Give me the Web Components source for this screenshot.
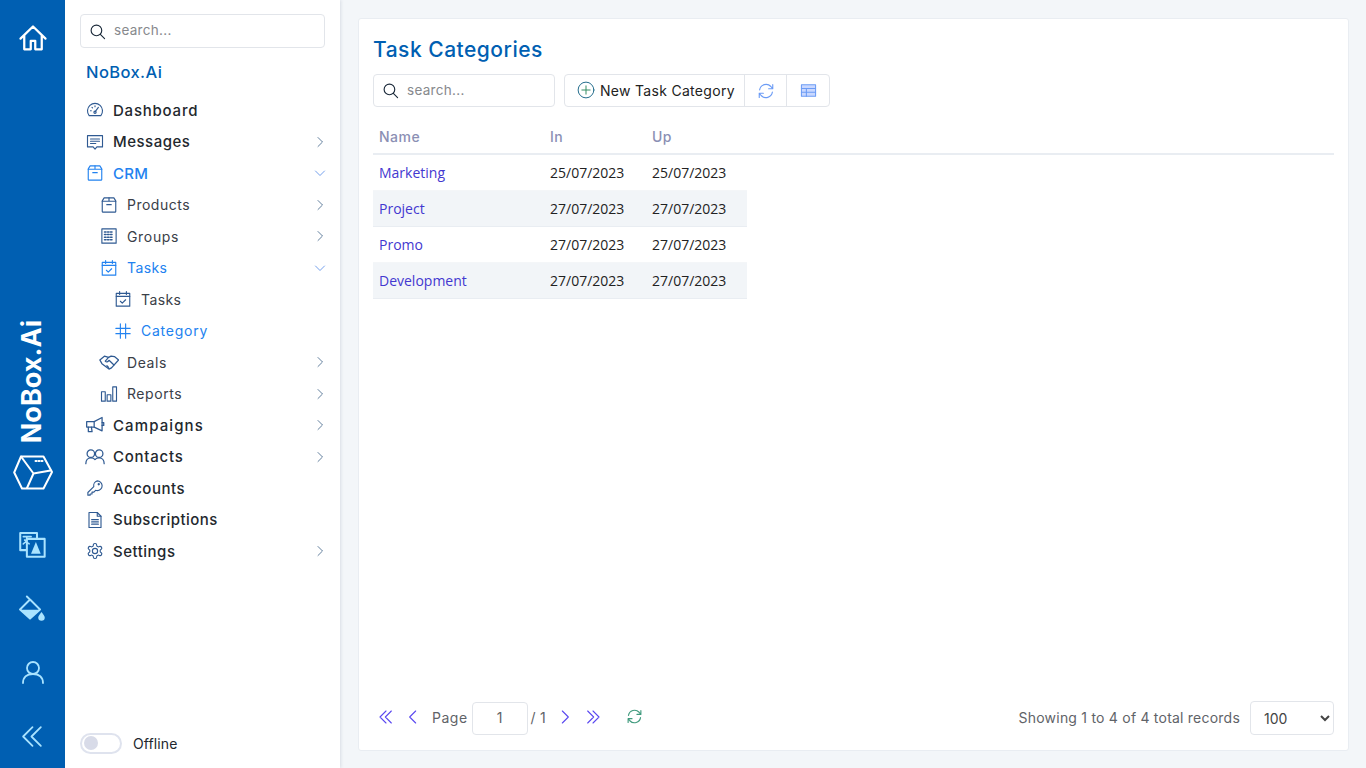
<!DOCTYPE html>
<html lang="en">
<head>
<meta charset="utf-8">
<title>Task Categories</title>
<style>
  html, body { margin: 0; height: 100%; overflow: hidden; }
  body { font-family: Inter, "Noto Sans", sans-serif; background: #f3f6f9; color: #222; }
</style>
</head>
<body>
<app-shell>
  <icon-rail slot="rail"></icon-rail>
  <side-nav slot="nav"></side-nav>
  <task-page slot="main"></task-page>
</app-shell>

<script>
const ICONS = {
  home: '<path d="M2 12.500 12 2.800l10 9.700M5 10v11h5.200v-6.800h3.600V21H19V10"/>',
  search: '<circle cx="10.500" cy="10.500" r="7.500"/><path d="m16 16 6 6"/>',
  gauge: '<path d="M4.200 19.500a10 10 0 1 1 15.600 0z"/><path d="m12 14.500 4.500-6"/><circle cx="12" cy="15" r="1.500"/><path d="M6 13h1M8 8.500l.7.7M12 6.500v1"/>',
  message: '<path d="M2 3.500h20v15h-7.500L12 21.500 9.500 18.500H2z"/><path d="M6 8h12M6 11h12M6 14h7"/>',
  box: '<path d="M5.500 2.500h13l2.500 4v14a1 1 0 0 1-1 1H4a1 1 0 0 1-1-1v-14z"/><path d="M3 7h18M12 2.500V7M9 11.500h6"/>',
  building: '<rect x="2.500" y="2.500" width="19" height="19"/><path d="M6 6.500h2m2 0h2m2 0h2M6 10h2m2 0h2m2 0h2M6 13.500h2m2 0h2m2 0h2M6 17h2m2 0h2m2 0h2" stroke-width="2"/>',
  calendar: '<rect x="3" y="4.500" width="18" height="17"/><path d="M3 8.500h18M7.500 2v4M16.500 2v4M8.500 15l2.500 2.500 4.500-4.500"/>',
  hash: '<path d="M8.500 2.500v19M15.500 2.500v19M2.500 8.500h19M2.500 15.500h19"/>',
  handshake: '<path d="M1 9.500 6.500 5l5 1.500L14.500 5l4 .5L23.500 9.500 15 19l-3 1.500L3.500 14z"/><path d="M11.500 6.500 7.500 11c1.500 1.500 3 1 4.500-1l6 5.500M9.500 16.500l2 2"/>',
  bars: '<rect x="2" y="9" width="5" height="12.500"/><rect x="9.500" y="13" width="5" height="8.500"/><rect x="17" y="2.500" width="5" height="19"/>',
  megaphone: '<path d="M2 8h9l9.500-5v16L11 14.500H2z"/><path d="M11 8v6.500M4 14.500V20h4.500l-.8-5.500M20.500 9h2v3.500h-2"/>',
  people: '<circle cx="7" cy="8" r="4.500"/><circle cx="17" cy="8" r="4.500"/><path d="M1 20c0-4 2.500-7 6-7s5 2 5 2 1.500-2 5-2 6 3 6 7"/>',
  key: '<path d="M15 2.500a6.500 6.500 0 0 1 0 13c-.8 0-1.500-.1-2.200-.4l-2.300 2.400H8V20H5.500v1.500h-3V18l7.900-7.900A6.500 6.500 0 0 1 15 2.500z"/><circle cx="17" cy="7" r=".8"/>',
  doc: '<path d="M4 2h11l5 5v15H4z"/><path d="M15 2v5h5M7.500 11.500h9M7.500 14.500h9M7.500 17.500h9"/>',
  gear: '<path d="M12.220 2h-.44a2 2 0 0 0-2 2v.18a2 2 0 0 1-1 1.730l-.43.250a2 2 0 0 1-2 0l-.15-.08a2 2 0 0 0-2.730.730l-.22.380a2 2 0 0 0 .730 2.730l.15.100a2 2 0 0 1 1 1.720v.510a2 2 0 0 1-1 1.740l-.15.090a2 2 0 0 0-.730 2.730l.22.380a2 2 0 0 0 2.730.730l.15-.08a2 2 0 0 1 2 0l.43.250a2 2 0 0 1 1 1.730V20a2 2 0 0 0 2 2h.44a2 2 0 0 0 2-2v-.18a2 2 0 0 1 1-1.730l.43-.250a2 2 0 0 1 2 0l.15.080a2 2 0 0 0 2.730-.730l.22-.390a2 2 0 0 0-.730-2.730l-.15-.080a2 2 0 0 1-1-1.740v-.5a2 2 0 0 1 1-1.740l.15-.090a2 2 0 0 0 .730-2.730l-.22-.380a2 2 0 0 0-2.730-.730l-.15.080a2 2 0 0 1-2 0l-.43-.250a2 2 0 0 1-1-1.730V4a2 2 0 0 0-2-2z"/><circle cx="12" cy="12" r="3.500"/>',
  right: '<path d="m8 3 9 9-9 9"/>',
  left: '<path d="m16 3-9 9 9 9"/>',
  down: '<path d="m3 8 9 9 9-9"/>',
  dleft: '<path d="M12 3 3 12l9 9M20 3l-9 9 9 9"/>',
  dright: '<path d="m4 3 9 9-9 9M12 3l9 9-9 9"/>',
  refresh: '<path d="M3.500 10.500A8.700 8.700 0 0 1 18.500 6l2.500 3M21 3.500V9h-5.500M20.500 13.500A8.700 8.700 0 0 1 5.500 18L3 15M3 20.500V15h5.500"/>',
  plus: '<circle cx="12" cy="12" r="10.500"/><path d="M12 6.500v11M6.500 12h11" stroke="#2f8a5f"/>',
  table: '<rect x="2" y="4" width="20" height="16" fill="#c9d8ff"/><path d="M2 9.300h20M2 14.600h20M9 9.300V20"/>',
  translate: '<rect x="1.100" y="1.800" width="14.900" height="15.200"/><rect x="7" y="7" width="15.800" height="15.800" fill="#005fb2"/><path d="M3.800 5h7M7 5c0 3-1.200 5-3.200 6.500M5 8c1 1.500 2.500 2.700 4 3.400" stroke-width="1.400"/><path d="m15 9.800 4.300 10.500h-8.600z" fill="currentColor" stroke="none"/>',
  paint: '<path d="M9.800 4 18.700 12.900 9.800 21 .9 12.900zM7 1.300 10.700 5"/><path d="M1 13h17.500L9.800 21z" fill="currentColor" stroke="none"/><path d="M20 15c1.700 2.300 2.900 3.500 2.900 5a2.900 2.900 0 0 1-5.800 0c0-1.500 1.200-2.700 2.900-5z" fill="currentColor" stroke="none"/>',
  person: '<circle cx="12" cy="8" r="6"/><path d="M2 23c0-6 4-9 10-9s10 3 10 9"/>',
  cube: '<path d="M8 2h22.500L39 17.500 30.500 34H9L1.200 18z"/><path d="M8 2 20.500 19 37.500 16M20.500 19 14 33.500"/><path d="M22.500 6.500h1M25.500 6.500h1M28.500 6.500h1"/>'
};

// small wrapper so every icon is one tag
class UiIcon extends HTMLElement {
  connectedCallback() {
    const size = this.getAttribute('size') || 18;
    const sw = this.getAttribute('stroke') || 1.6;
    const name = this.getAttribute('name');
    const box = name === 'cube' ? '0 0 40 37' : '0 0 24 24';
    this.attachShadow({ mode: 'open' });
    this.shadowRoot.innerHTML = `
      <style>
        :host { display: inline-flex; flex: none; }
        svg { display: block; fill: none; stroke: currentColor; stroke-linecap: round; stroke-linejoin: round; }
      </style>
      <svg width="${size}" height="${size}" viewBox="${box}" stroke-width="${sw}">${ICONS[name] || ''}</svg>
    `;
  }
}
customElements.define('ui-icon', UiIcon);

class AppShell extends HTMLElement {
  connectedCallback() {
    this.attachShadow({ mode: 'open' });
    this.shadowRoot.innerHTML = `
      <style>
        :host { display: flex; width: 1366px; height: 768px; }
        main { flex: 1; min-width: 0; padding: 18px 17px 17px 18px; box-sizing: border-box; display: flex; }
      </style>
      <slot name="rail"></slot>
      <slot name="nav"></slot>
      <main><slot name="main"></slot></main>
    `;
  }
}
customElements.define('app-shell', AppShell);

class IconRail extends HTMLElement {
  connectedCallback() {
    this.attachShadow({ mode: 'open' });
    this.shadowRoot.innerHTML = `
      <style>
        :host { display: flex; flex-direction: column; align-items: center; width: 65px; height: 768px; background: #005fb2; color: #a9e3ff; flex: none; }
        .home { height: 76px; display: flex; align-items: center; color: #fff; }
        .spacer { flex: 1; }
        .brand { writing-mode: vertical-rl; transform: rotate(180deg); font: 700 27px/1 Inter, sans-serif; color: #fff; margin-left: -3px; }
        .cube { color: #fff; height: 39px; margin: 10px 0 20px; display: flex; align-items: center; }
        .item { height: 64px; display: flex; align-items: center; justify-content: center; }
      </style>
      <div class="home"><ui-icon name="home" size="30" stroke="1.800"></ui-icon></div>
      <div class="spacer"></div>
      <div class="brand">NoBox.Ai</div>
      <div class="cube"><ui-icon name="cube" size="40" stroke="2"></ui-icon></div>
      <div class="item"><ui-icon name="translate" size="27" stroke="1.800"></ui-icon></div>
      <div class="item"><ui-icon name="paint" size="27" stroke="1.700"></ui-icon></div>
      <div class="item"><ui-icon name="person" size="24" stroke="1.800"></ui-icon></div>
      <div class="item"><ui-icon name="dleft" size="25" stroke="1.700"></ui-icon></div>
    `;
  }
}
customElements.define('icon-rail', IconRail);

class SearchBox extends HTMLElement {
  connectedCallback() {
    this.attachShadow({ mode: 'open' });
    this.shadowRoot.innerHTML = `
      <style>
        :host { display: flex; align-items: center; box-sizing: border-box; gap: 8px; padding-left: 8px; background: #fff; border: 1px solid #e2e5ea; border-radius: 4px; color: #1b2a3a; }
        input { border: 0; outline: 0; padding: 0 0 2px; width: 100%; min-width: 0; background: none; font: 400 13.500px Inter, sans-serif; letter-spacing: .3px; }
        input::placeholder { color: #87898d; opacity: 1; }
      </style>
      <ui-icon name="search" size="17"></ui-icon>
      <input placeholder="search...">
    `;
  }
}
customElements.define('search-box', SearchBox);

class NavItem extends HTMLElement {
  connectedCallback() {
    const level = +this.getAttribute('level') || 0;
    const active = this.hasAttribute('active');
    const chev = this.getAttribute('chevron');
    // spacing per label, the app font here is wider than what we have installed
    const ls = this.getAttribute('ls') || '.5';
    const isize = this.getAttribute('isize') || 18;
    this.attachShadow({ mode: 'open' });
    this.shadowRoot.innerHTML = `
      <style>
        :host { display: flex; align-items: center; height: 31.500px; box-sizing: border-box; padding-left: ${level * 14}px; font: ${level ? 400 : 450} ${level ? 14 : 15}px Inter, sans-serif; letter-spacing: ${ls}px; color: ${active ? '#2282f0' : (level ? '#3a4048' : '#23282e')}; }
        .ic { width: 20px; display: flex; justify-content: center; margin-right: 8px; color: ${active ? '#2282f0' : '#2f5a92'}; }
        .label { flex: 1; }
        .chev { width: 12px; display: flex; justify-content: center; color: ${chev === 'down' ? '#5b8fe8' : '#47698c'}; }
      </style>
      <span class="ic"><ui-icon name="${this.getAttribute('icon')}" size="${isize}" stroke="1.500"></ui-icon></span>
      <span class="label"><slot></slot></span>
      ${chev ? `<span class="chev"><ui-icon name="${chev}" size="12" stroke="1.700"></ui-icon></span>` : ''}
    `;
  }
}
customElements.define('nav-item', NavItem);

class SideNav extends HTMLElement {
  connectedCallback() {
    this.attachShadow({ mode: 'open' });
    this.shadowRoot.innerHTML = `
      <style>
        :host { display: flex; flex-direction: column; width: 275px; height: 768px; box-sizing: border-box; padding: 14px 15px 14px 15px; background: #fff; box-shadow: 1px 0 3px rgba(30,50,90,.12); flex: none; }
        search-box { height: 34px; }
        .title { font: 500 16.500px/1 Inter, sans-serif; letter-spacing: .4px; color: #005fb2; margin: 16px 0 13.400px 6px; height: 17px; }
        nav { padding-left: 5px; margin-right: -1px; }
        .foot { margin-top: auto; display: flex; align-items: center; gap: 11px; font: 400 14px Inter, sans-serif; letter-spacing: .1px; color: #23282e; height: 22px; }
        .toggle { width: 42px; height: 21px; box-sizing: border-box; border: 2px solid #dfe3ee; border-radius: 11px; display: flex; align-items: center; padding-left: 2px; }
        .toggle i { width: 14px; height: 14px; border-radius: 50%; background: #d8dbe8; }
      </style>
      <search-box></search-box>
      <div class="title">NoBox.Ai</div>
      <nav>
        <nav-item icon="gauge" ls=".78">Dashboard</nav-item>
        <nav-item icon="message" ls=".5" chevron="right">Messages</nav-item>
        <nav-item icon="box" ls=".3" chevron="down" active>CRM</nav-item>
        <nav-item icon="box" level="1" chevron="right">Products</nav-item>
        <nav-item icon="building" level="1" ls=".67" chevron="right">Groups</nav-item>
        <nav-item icon="calendar" level="1" ls=".4" chevron="down" active>Tasks</nav-item>
        <nav-item icon="calendar" level="2" ls=".4">Tasks</nav-item>
        <nav-item icon="hash" level="2" ls=".75" active>Category</nav-item>
        <nav-item icon="handshake" level="1" ls=".6" isize="20" chevron="right">Deals</nav-item>
        <nav-item icon="bars" level="1" ls=".57" chevron="right">Reports</nav-item>
        <nav-item icon="megaphone" ls="1.1" isize="20" chevron="right">Campaigns</nav-item>
        <nav-item icon="people" ls=".75" isize="20" chevron="right">Contacts</nav-item>
        <nav-item icon="key">Accounts</nav-item>
        <nav-item icon="doc" ls=".46">Subscriptions</nav-item>
        <nav-item icon="gear" chevron="right">Settings</nav-item>
      </nav>
      <div class="foot"><span class="toggle"><i></i></span>Offline</div>
    `;
  }
}
customElements.define('side-nav', SideNav);

class TaskTable extends HTMLElement {
  connectedCallback() {
    const rows = [
      ['Marketing', '25/07/2023', '25/07/2023'],
      ['Project', '27/07/2023', '27/07/2023'],
      ['Promo', '27/07/2023', '27/07/2023'],
      ['Development', '27/07/2023', '27/07/2023']
    ];
    this.attachShadow({ mode: 'open' });
    this.shadowRoot.innerHTML = `
      <style>
        :host { display: block; }
        .head { display: grid; grid-template-columns: 171px 102px 101px; height: 35px; box-sizing: content-box; align-items: center; border-bottom: 2px solid #e9edf2; font: 500 14px Inter, sans-serif; letter-spacing: .5px; color: #8b8fb4; }
        .head span { padding: 2px 0 0 6px; }
        .row span { padding-left: 6px; }
        .body { width: 374px; }
        .row { display: grid; grid-template-columns: 171px 102px 101px; height: 36px; box-sizing: border-box; align-items: center; border-bottom: 1px solid #e9edf2; font: 400 14px "Open Sans", sans-serif; color: #222; }
        .row:nth-child(1), .row:nth-child(3) { border-bottom-color: #f4f6f8; }
        .row:nth-child(even) { background: #f2f5f8; }
        .row span:first-child { color: #4338d0; }
      </style>
      <div class="head"><span>Name</span><span>In</span><span>Up</span></div>
      <div class="body">
        ${rows.map(r => `<div class="row"><span>${r[0]}</span><span>${r[1]}</span><span>${r[2]}</span></div>`).join('')}
      </div>
    `;
  }
}
customElements.define('task-table', TaskTable);

class PagerBar extends HTMLElement {
  connectedCallback() {
    this.attachShadow({ mode: 'open' });
    this.shadowRoot.innerHTML = `
      <style>
        :host { display: flex; align-items: center; height: 34px; font: 400 14px Inter, sans-serif; color: #5f6368; }
        .nav { display: flex; color: #5a48f0; padding-bottom: 3px; }
        .txt { padding-bottom: 2px; letter-spacing: .22px; }
        .page { width: 56px; height: 33px; box-sizing: border-box; border: 1px solid #e2e5ea; border-radius: 4px; margin: 0 3px 0 4px; text-align: center; font: inherit; color: inherit; outline: 0; padding: 0 0 2px; }
        .spacer { flex: 1; }
        select { width: 84px; height: 34px; margin-left: 10px; background: #fff; border: 1px solid #e2e5ea; border-radius: 4px; font: inherit; color: #444; padding-left: 9px; outline: 0; }
      </style>
      <span class="nav" style="margin:0 11px 0 5px"><ui-icon name="dleft" size="16"></ui-icon></span>
      <span class="nav" style="margin-right:11px"><ui-icon name="left" size="16"></ui-icon></span>
      <span class="txt" style="letter-spacing:.5px">Page</span>
      <input class="page" value="1">
      <span class="txt">/ 1</span>
      <span class="nav" style="margin:0 12px 0 11px"><ui-icon name="right" size="16"></ui-icon></span>
      <span class="nav"><ui-icon name="dright" size="16"></ui-icon></span>
      <span class="nav" style="margin-left:25px;color:#3f9a7d"><ui-icon name="refresh" size="17"></ui-icon></span>
      <span class="spacer"></span>
      <span class="txt">Showing 1 to 4 of 4 total records</span>
      <select><option>100</option></select>
    `;
  }
}
customElements.define('pager-bar', PagerBar);

class TaskPage extends HTMLElement {
  connectedCallback() {
    this.attachShadow({ mode: 'open' });
    this.shadowRoot.innerHTML = `
      <style>
        :host { display: flex; flex-direction: column; flex: 1; box-sizing: border-box; background: #fff; border: 1px solid #e9edf2; border-radius: 3px; padding: 14px 14px 15px; }
        h1 { margin: 0; font: 500 21px/34px Inter, sans-serif; letter-spacing: .5px; color: #005fb2; }
        .tools { display: flex; gap: 9px; height: 33px; margin: 7px 0 11px; }
        search-box { width: 182px; }
        .group { display: flex; border: 1px solid #e2e5ea; border-radius: 4px; }
        .btn { display: flex; align-items: center; justify-content: center; gap: 5px; box-sizing: border-box; font: 400 14px Inter, sans-serif; letter-spacing: .3px; color: #222; }
        .btn + .btn { border-left: 1px solid #e2e5ea; }
        .new { width: 179px; justify-content: flex-start; padding: 0 0 1px 12px; }
        .new ui-icon { color: #1f6a8a; }
        .sq { width: 42px; color: #6c9cf5; }
        .sq:last-child { width: 43px; }
        task-table { flex: 1; }
      </style>
      <h1>Task Categories</h1>
      <div class="tools">
        <search-box></search-box>
        <div class="group">
          <div class="btn new"><ui-icon name="plus" size="18" stroke="1.300"></ui-icon>New Task Category</div>
          <div class="btn sq"><ui-icon name="refresh" size="18" stroke="1.500"></ui-icon></div>
          <div class="btn sq"><ui-icon name="table" size="17" stroke="1.500"></ui-icon></div>
        </div>
      </div>
      <task-table></task-table>
      <pager-bar></pager-bar>
    `;
  }
}
customElements.define('task-page', TaskPage);
</script>
</body>
</html>
